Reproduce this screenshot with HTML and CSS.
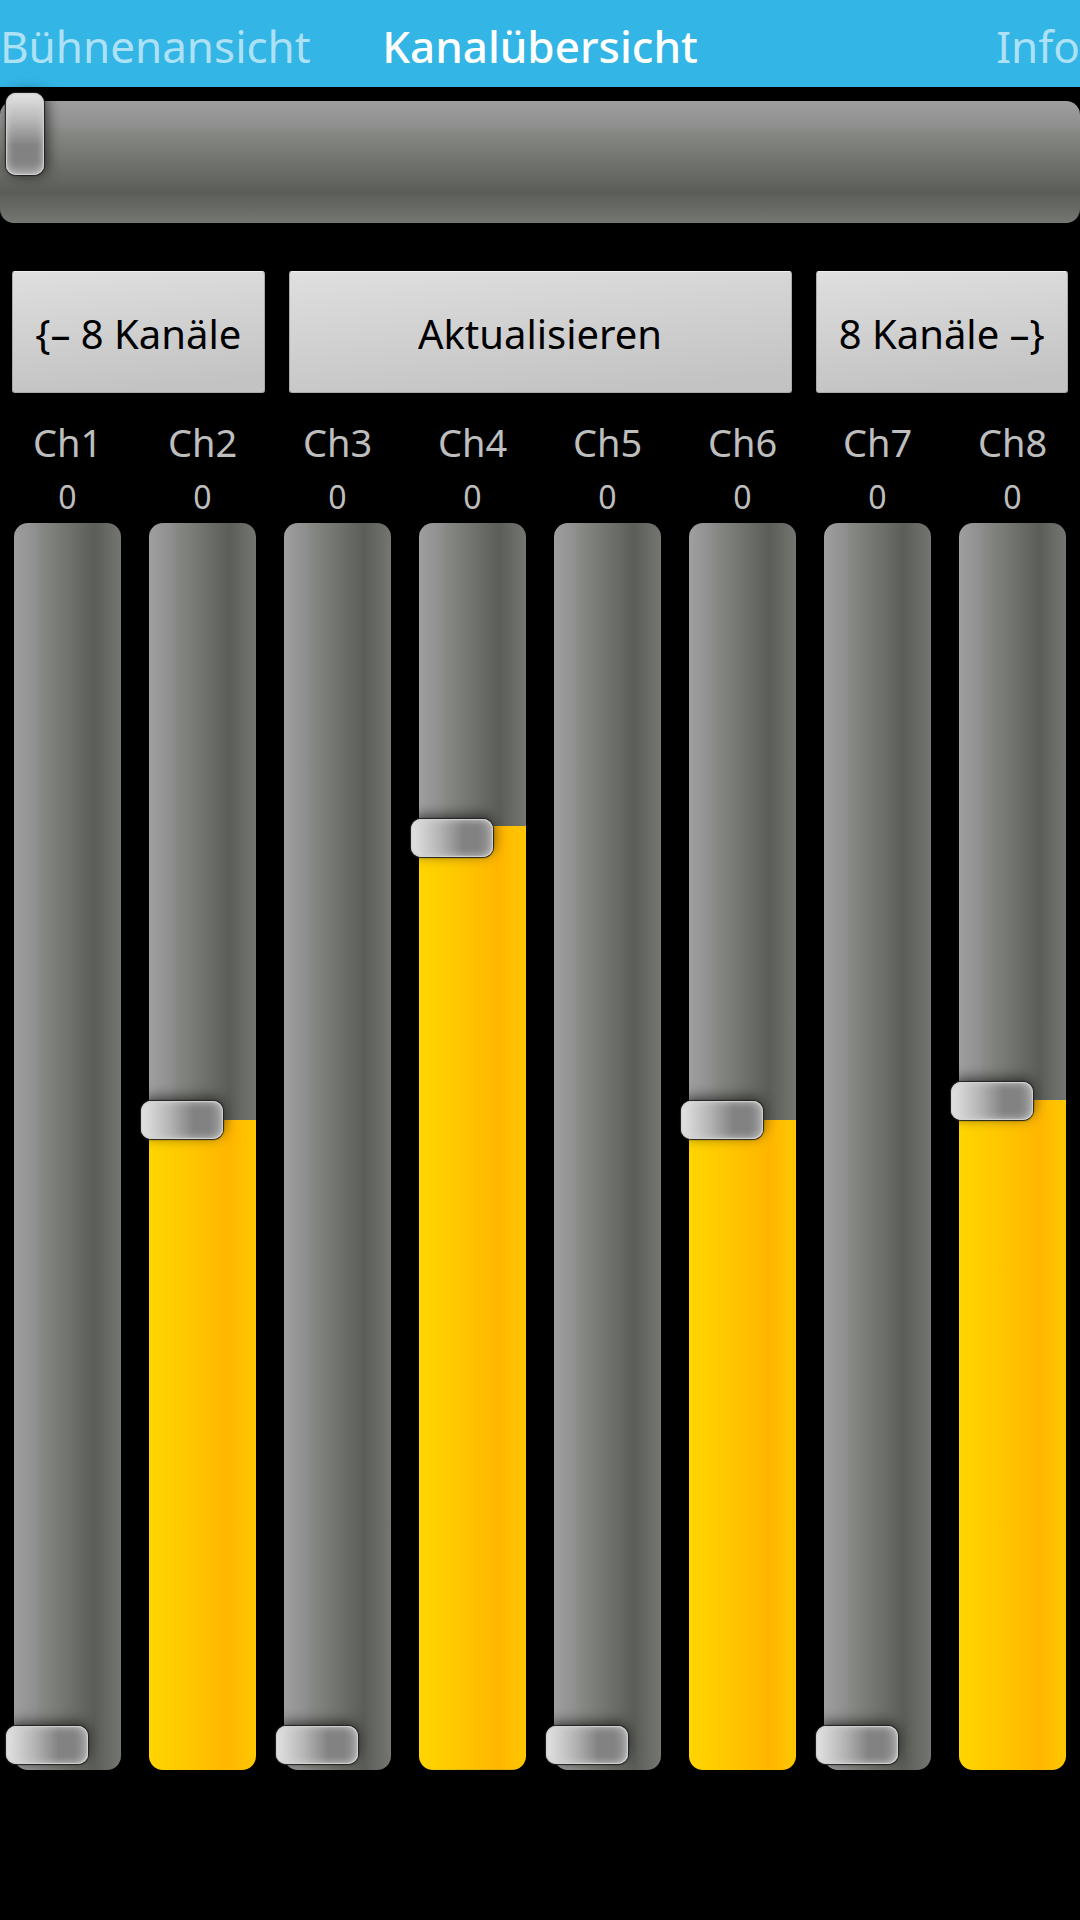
FILE: index.html
```html
<!DOCTYPE html>
<html lang="de">
<head>
<meta charset="utf-8">
<meta name="viewport" content="width=device-width, initial-scale=1">
<title>Kanalübersicht</title>
<link rel="stylesheet" href="styles.css">
</head>
<body>
<nav class="tabs">
  <a class="tab" href="#buehne">Bühnenansicht</a>
  <a class="tab tab-current" href="#kanaele" aria-current="page">Kanalübersicht</a>
  <a class="tab tab-last" href="#info">Info</a>
</nav>
<main class="console">
  <input class="fader fader-wide" type="range" min="0" max="255" value="0" aria-label="Master">
  <div class="actions">
    <button class="action" type="button">{– 8 Kanäle</button>
    <button class="action action-main" type="button">Aktualisieren</button>
    <button class="action" type="button">8 Kanäle –}</button>
  </div>
  <section class="channels">
    <div class="channel"><label class="name" for="ch1">Ch1</label><output class="value" for="ch1">0</output><input class="fader fader-tall" id="ch1" type="range" min="0" max="255" value="0" style="--level:0"></div>
    <div class="channel"><label class="name" for="ch2">Ch2</label><output class="value" for="ch2">0</output><input class="fader fader-tall" id="ch2" type="range" min="0" max="255" value="133" style="--level:133"></div>
    <div class="channel"><label class="name" for="ch3">Ch3</label><output class="value" for="ch3">0</output><input class="fader fader-tall" id="ch3" type="range" min="0" max="255" value="0" style="--level:0"></div>
    <div class="channel"><label class="name" for="ch4">Ch4</label><output class="value" for="ch4">0</output><input class="fader fader-tall" id="ch4" type="range" min="0" max="255" value="193" style="--level:193"></div>
    <div class="channel"><label class="name" for="ch5">Ch5</label><output class="value" for="ch5">0</output><input class="fader fader-tall" id="ch5" type="range" min="0" max="255" value="0" style="--level:0"></div>
    <div class="channel"><label class="name" for="ch6">Ch6</label><output class="value" for="ch6">0</output><input class="fader fader-tall" id="ch6" type="range" min="0" max="255" value="133" style="--level:133"></div>
    <div class="channel"><label class="name" for="ch7">Ch7</label><output class="value" for="ch7">0</output><input class="fader fader-tall" id="ch7" type="range" min="0" max="255" value="0" style="--level:0"></div>
    <div class="channel"><label class="name" for="ch8">Ch8</label><output class="value" for="ch8">0</output><input class="fader fader-tall" id="ch8" type="range" min="0" max="255" value="137" style="--level:137"></div>
  </section>
</main>
</body>
</html>
```
FILE: styles.css
```css
* {
  box-sizing: border-box;
}

body {
  margin: 0;
  min-height: 100vh;
  display: flex;
  flex-direction: column;
  background: #000;
  color: #bebebe;
  font-family: "Noto Sans", sans-serif;
}

/* Tab strip */
.tabs {
  display: grid;
  grid-template-columns: 1fr auto 1fr;
  align-items: center;
  height: 87px;
  padding-top: 4px;
  background: #33b5e5;
  font-size: 44px;
  line-height: 60px;
}

.tab {
  color: #ade1f5;
  text-decoration: none;
}

.tab-current {
  color: #fff;
  font-weight: 500;
}

.tab-last {
  text-align: right;
}

.console {
  flex: 1;
  display: flex;
  flex-direction: column;
  padding: 14px 0 150px;
}

/* Faders */
.fader {
  --shade: #9f9f9f, #8f8f8f 20%, #868883 26%, #5b5d58 75%, #747672;
  --metal: #e4e4e4, #b4b4b4 35%, #828282 64%, #828282 82%, #989898;
  appearance: none;
  display: block;
  width: 100%;
  margin: 0;
  border-radius: 14px;
}

.fader-wide {
  height: 122px;
  padding: 0 6px;
  background: linear-gradient(to bottom, var(--shade));
}

.fader-wide::-webkit-slider-runnable-track {
  height: 122px;
}

.fader-wide::-webkit-slider-thumb {
  appearance: none;
  width: 38px;
  height: 82px;
  margin-top: -8px;
  border-radius: 10px;
  background: linear-gradient(to bottom, var(--metal));
  box-shadow: inset 0 0 8px #d8d8d8, inset 0 0 1px 1px #ccc, 0 0 1px 1px #222, 3px 0 14px #000a;
}

.fader-tall {
  flex: 1;
  min-height: 300px;
  padding: 5px 0 6px;
  writing-mode: vertical-lr;
  direction: rtl;
  background:
    linear-gradient(to right, #ffd500, #ffc800 35%, #ffb600 75%, #ffc800) bottom / 100% calc(var(--level) / 255 * 100%) no-repeat,
    linear-gradient(to right, var(--shade));
}

.fader-tall::-webkit-slider-runnable-track {
  width: 100%;
}

.fader-tall::-webkit-slider-thumb {
  appearance: none;
  width: 82px;
  height: 38px;
  margin-left: -8px;
  border-radius: 10px;
  background: linear-gradient(to right, var(--metal));
  box-shadow: inset 0 0 8px #d8d8d8, inset 0 0 1px 1px #ccc, 0 0 1px 1px #222, 0 -3px 14px #000a;
}

/* Bank buttons */
.actions {
  display: flex;
  gap: 24px;
  padding: 48px 12px 24px;
}

.action {
  flex: 1 1 0;
  height: 122px;
  padding: 2px 0 0;
  border: 1px solid #aaa;
  border-top-color: #eee;
  border-radius: 3px;
  background: linear-gradient(175deg, #dfdfdf, #c3c3c3 90%);
  color: #000;
  font: inherit;
  font-size: 40px;
  white-space: nowrap;
}

.action-main {
  flex-grow: 2;
}

/* Channel strips */
.channels {
  flex: 1;
  display: grid;
  grid-template-columns: repeat(8, 1fr);
}

.channel {
  display: flex;
  flex-direction: column;
  padding: 0 14px;
  text-align: center;
}

.name {
  font-size: 38px;
  line-height: 50px;
}

.value {
  height: 56px;
  font-size: 32px;
  line-height: 60px;
}
```
